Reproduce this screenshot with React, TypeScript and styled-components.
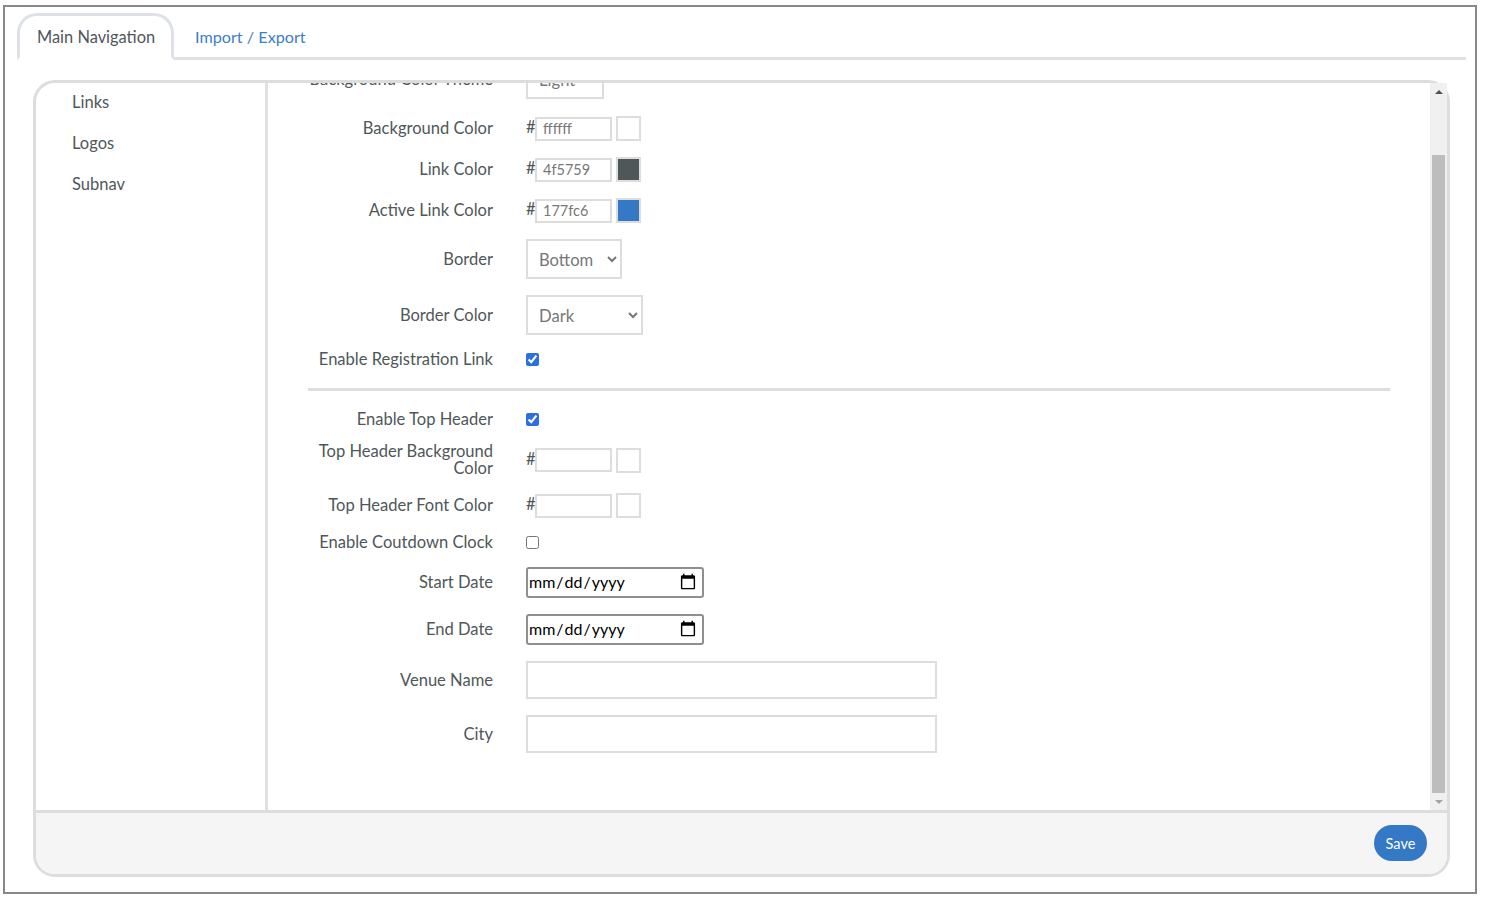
import React from 'react';
import styled, { createGlobalStyle } from 'styled-components';

const GlobalStyle = createGlobalStyle`
  html, body {
    margin: 0;
    padding: 0;
    background: #fff;
    font-family: Lato, "Liberation Sans", sans-serif;
    color: #4f5759;
  }
`;

const Frame = styled.div`
  box-sizing: border-box;
  width: 1474px;
  height: 889px;
  margin: 5px 0 0 3px;
  border: 2px solid #888;
  padding: 6px 9px 0 12px;
  display: flex;
  flex-direction: column;
`;

const TabBar = styled.div`
  display: flex;
  height: 47px;
  box-sizing: border-box;
  border-bottom: 3px solid #dee2e6;
`;

const ActiveTab = styled.div`
  box-sizing: border-box;
  width: 157px;
  height: 47px;
  padding: 6px 0 0 17px;
  border: 3px solid #dee2e6;
  border-bottom: 3px solid #fff;
  border-radius: 20px 20px 0 0;
  font-size: 16.4px;
  line-height: 30px;
  background: #fff;
`;

const TabLink = styled.a`
  margin-left: 21px;
  padding-top: 9px;
  font-size: 16.2px;
  line-height: 30px;
  color: #3a80c9;
`;

const Panel = styled.div`
  box-sizing: border-box;
  width: 1417px;
  height: 797px;
  margin: 20px 0 0 16px;
  border: 3px solid #ddd;
  border-radius: 22px;
  display: flex;
  flex-direction: column;
  background: #fff;
`;

const Body = styled.div`
  flex: 1;
  display: flex;
  min-height: 0;
`;

const Sidebar = styled.nav`
  box-sizing: border-box;
  width: 232px;
  flex: none;
  border-right: 3px solid #dee2e6;
  padding: 9px 0 0 36px;
  display: flex;
  flex-direction: column;
  gap: 21px;
`;

const SideLink = styled.a`
  font-size: 16.5px;
  line-height: 20px;
  color: #4f5759;
`;

const Content = styled.div`
  flex: 1;
  min-width: 0;
  overflow: hidden;
  padding: 0 40px;
`;

const Form = styled.form`
  margin-top: -24px;
`;

const Row = styled.div<{ $height: number; $gap?: number }>`
  display: flex;
  align-items: center;
  height: ${(p) => p.$height}px;
  margin-bottom: ${(p) => p.$gap ?? 16}px;
`;

const Label = styled.label`
  box-sizing: border-box;
  width: 185px;
  flex: none;
  margin-right: 33px;
  text-align: right;
  font-size: 16.55px;
  line-height: 17px;
  color: #4f5759;
`;

const Hash = styled.span`
  width: 9px;
  flex: none;
  padding-bottom: 2px;
  font-size: 16.5px;
  line-height: 17px;
`;

const HexInput = styled.input`
  box-sizing: border-box;
  width: 77px;
  height: 24px;
  padding: 0 0 0 6px;
  border: 2px solid #ddd;
  border-radius: 0;
  outline: none;
  font-family: Lato, sans-serif;
  font-size: 14.5px;
  color: #777;
`;

const Swatch = styled.div<{ $color: string }>`
  box-sizing: border-box;
  width: 25px;
  height: 25px;
  margin-left: 4px;
  border: 2px solid #ddd;
  background: ${(p) => p.$color};
`;

const Select = styled.select<{ $width: number }>`
  box-sizing: border-box;
  width: ${(p) => p.$width}px;
  height: 40px;
  padding: 2px 4px 0 7px;
  border: 2px solid #ddd;
  border-radius: 0;
  background: #fff;
  outline: none;
  font-family: Lato, sans-serif;
  font-size: 16.6px;
  color: #777;
`;

const Check = styled.input`
  width: 13px;
  height: 13px;
  margin: 0;
  accent-color: #2b6fe3;
`;

const DateInput = styled.input`
  box-sizing: border-box;
  width: 178px;
  height: 31px;
  padding: 0 5px 2px 0;
  font-family: Lato, sans-serif;
  font-size: 16px;
  border: 2px solid #8f8f8f;
  border-radius: 3px;
  background: #fff;
  color: #000;

  &::-webkit-calendar-picker-indicator {
    width: 18px;
    height: 18px;
    padding: 0;
    margin: 0;
  }
`;

const TextInput = styled.input`
  box-sizing: border-box;
  width: 411px;
  height: 38px;
  border: 2px solid #ddd;
  border-radius: 0;
  outline: none;
  padding: 0 12px;
  font-family: Lato, sans-serif;
  font-size: 16px;
`;

const Divider = styled.hr`
  height: 3px;
  margin: 0 0 20px;
  border: none;
  background: #ddd;
`;

const Scrollbar = styled.div`
  box-sizing: border-box;
  width: 17px;
  flex: none;
  background: #f0f0f0;
  display: flex;
  flex-direction: column;
  align-items: center;
`;

const Arrow = styled.div<{ $up?: boolean }>`
  flex: none;
  width: 0;
  height: 0;
  margin: ${(p) => (p.$up ? '7px 0 0' : '0 0 6px')};
  border-left: 4px solid transparent;
  border-right: 4px solid transparent;
  ${(p) => (p.$up ? 'border-bottom: 4px solid #505050;' : 'border-top: 4px solid #a3a3a3;')}
`;

const Thumb = styled.div`
  box-sizing: border-box;
  width: 13px;
  height: 638px;
  margin: 61px 0 auto;
  background: #bdbdbd;
`;

const Footer = styled.div`
  box-sizing: border-box;
  height: 64px;
  flex: none;
  border-top: 3px solid #ddd;
  border-radius: 0 0 19px 19px;
  background: #f5f5f5;
  display: flex;
  justify-content: flex-end;
  align-items: flex-start;
  padding: 12px 20px 0 0;
`;

const SaveButton = styled.button`
  width: 53px;
  height: 36px;
  padding: 0;
  border: none;
  border-radius: 18px;
  background: #3379c6;
  color: #fff;
  font-family: Lato, sans-serif;
  font-size: 14.5px;
`;

const noop = () => {};

function HexRow({ label, value, color, height }: { label: string; value: string; color: string; height?: number }) {
  return (
    <Row $height={height ?? 25}>
      <Label>{label}</Label>
      <Hash>#</Hash>
      <HexInput value={value} onChange={noop} />
      <Swatch $color={color} />
    </Row>
  );
}

export default function App() {
  return (
    <>
      <GlobalStyle />
      <Frame>
        <TabBar>
          <ActiveTab>Main Navigation</ActiveTab>
          <TabLink>Import / Export</TabLink>
        </TabBar>
        <Panel>
          <Body>
            <Sidebar>
              <SideLink>Links</SideLink>
              <SideLink>Logos</SideLink>
              <SideLink>Subnav</SideLink>
            </Sidebar>
            <Content>
              <Form>
                <Row $height={40} $gap={17}>
                  <Label>Background Color Theme</Label>
                  <Select $width={78} defaultValue="Light">
                    <option>Light</option>
                  </Select>
                </Row>
                <HexRow label="Background Color" value="ffffff" color="#fff" />
                <HexRow label="Link Color" value="4f5759" color="#4f5759" />
                <HexRow label="Active Link Color" value="177fc6" color="#3379c6" />
                <Row $height={40}>
                  <Label>Border</Label>
                  <Select $width={96} defaultValue="Bottom">
                    <option>Bottom</option>
                  </Select>
                </Row>
                <Row $height={40}>
                  <Label>Border Color</Label>
                  <Select $width={117} defaultValue="Dark">
                    <option>Dark</option>
                  </Select>
                </Row>
                <Row $height={17} $gap={20}>
                  <Label>Enable Registration Link</Label>
                  <Check type="checkbox" defaultChecked />
                </Row>
                <Divider />
                <Row $height={17} $gap={15}>
                  <Label>Enable Top Header</Label>
                  <Check type="checkbox" defaultChecked />
                </Row>
                <HexRow label="Top Header Background Color" value="" color="#fff" height={34} />
                <HexRow label="Top Header Font Color" value="" color="#fff" />
                <Row $height={17}>
                  <Label>Enable Coutdown Clock</Label>
                  <Check type="checkbox" />
                </Row>
                <Row $height={31}>
                  <Label>Start Date</Label>
                  <DateInput type="date" />
                </Row>
                <Row $height={31}>
                  <Label>End Date</Label>
                  <DateInput type="date" />
                </Row>
                <Row $height={38}>
                  <Label>Venue Name</Label>
                  <TextInput />
                </Row>
                <Row $height={38}>
                  <Label>City</Label>
                  <TextInput />
                </Row>
              </Form>
            </Content>
            <Scrollbar>
              <Arrow $up />
              <Thumb />
              <Arrow />
            </Scrollbar>
          </Body>
          <Footer>
            <SaveButton>Save</SaveButton>
          </Footer>
        </Panel>
      </Frame>
    </>
  );
}
